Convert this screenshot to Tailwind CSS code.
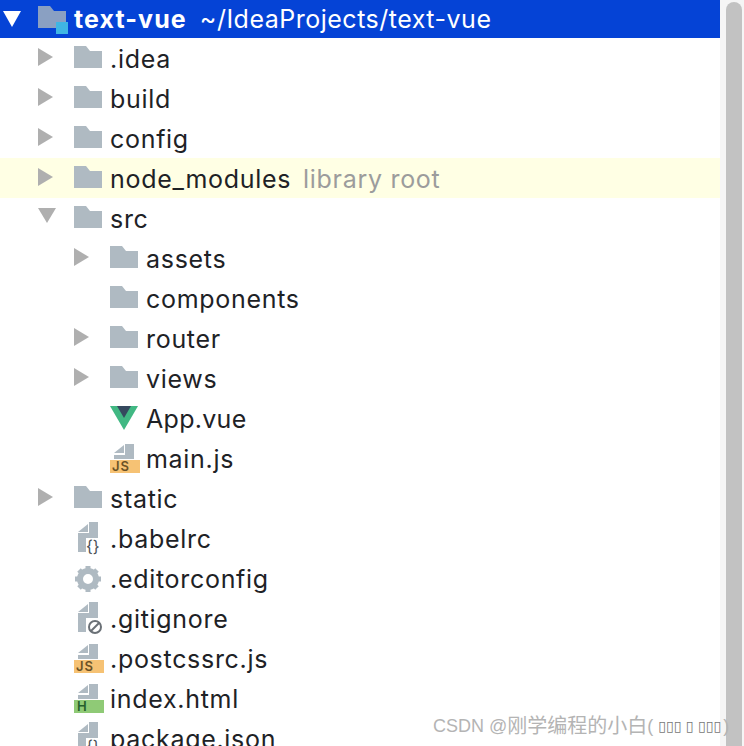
<!DOCTYPE html>
<html lang="en">
<head>
    <meta charset="UTF-8">
    <title>text-vue</title>
    <script src="https://cdn.jsdelivr.net/npm/@tailwindcss/browser@4"></script>
</head>
<body class="bg-white">

    <!-- shared icons, coordinates are relative to a 36x40 icon slot -->
    <svg class="hidden">
        <symbol id="folder" viewBox="0 0 36 40">
            <path d="M0 8H12L16 13H28V30H0Z" fill="#afbac2"/>
        </symbol>
        <symbol id="right" viewBox="0 0 16 40">
            <path d="M0 10L15 19L0 28Z" fill="#afafaf"/>
        </symbol>
        <symbol id="doc" viewBox="0 0 36 40">
            <path d="M4 14L14 6V14Z" fill="#afbac2"/>
            <path d="M15 4H24V34H4V15H15Z" fill="#afbac2"/>
        </symbol>
        <symbol id="shortdoc" viewBox="0 0 36 40">
            <path d="M4 15L14 7V15Z" fill="#afbac2"/>
            <path d="M15 6H24V21H4V17H15Z" fill="#afbac2"/>
        </symbol>
    </svg>

    <div class="relative flex h-[746px] w-[744px] overflow-hidden font-['Inter','Liberation_Sans',sans-serif] text-[25px] tracking-[0.7px] text-[#1e2226]">
        <div class="w-[720px] shrink-0">

            <div class="flex h-[38px] items-center bg-[#0543d6] pl-[3px] text-white">
                <svg class="mr-[17px] w-[18px] h-[18px]" viewBox="0 0 18 18"><path d="M0 1H18L9 17Z" fill="#fff"/></svg>
                <svg class="w-[36px] h-[38px]" viewBox="0 0 36 38">
                    <path d="M0 6H12L16 11H28V28H0Z" fill="#8aa0c2"/>
                    <rect x="18" y="22" width="12" height="12" fill="#3fb6e4"/>
                </svg>
                <span class="mt-0.5 font-bold tracking-[1.1px]">text-vue</span>
                <span class="mt-0.5 ml-[13px] tracking-[0.5px]">~/IdeaProjects/text-vue</span>
            </div>

            <div class="flex h-10 items-center pl-[38px]">
                <svg class="mr-[20px] h-10 w-4"><use href="#right"/></svg>
                <svg class="h-10 w-9"><use href="#folder"/></svg>
                <span class="mt-1">.idea</span>
            </div>
            <div class="flex h-10 items-center pl-[38px]">
                <svg class="mr-[20px] h-10 w-4"><use href="#right"/></svg>
                <svg class="h-10 w-9"><use href="#folder"/></svg>
                <span class="mt-1">build</span>
            </div>
            <div class="flex h-10 items-center pl-[38px]">
                <svg class="mr-[20px] h-10 w-4"><use href="#right"/></svg>
                <svg class="h-10 w-9"><use href="#folder"/></svg>
                <span class="mt-1">config</span>
            </div>
            <div class="flex h-10 items-center bg-[#ffffe4] pl-[38px]">
                <svg class="mr-[20px] h-10 w-4"><use href="#right"/></svg>
                <svg class="h-10 w-9"><use href="#folder"/></svg>
                <span class="mt-1">node_modules</span>
                <span class="mt-1 ml-3 text-[#9c9c9c]">library root</span>
            </div>
            <div class="flex h-10 items-center pl-[38px]">
                <svg class="mr-[18px] h-10 w-[18px]" viewBox="0 0 18 40"><path d="M0 10H18L9 25Z" fill="#afafaf"/></svg>
                <svg class="h-10 w-9"><use href="#folder"/></svg>
                <span class="mt-1">src</span>
            </div>

            <div class="flex h-10 items-center pl-[74px]">
                <svg class="mr-[20px] h-10 w-4"><use href="#right"/></svg>
                <svg class="h-10 w-9"><use href="#folder"/></svg>
                <span class="mt-1">assets</span>
            </div>
            <div class="flex h-10 items-center pl-[110px]">
                <svg class="h-10 w-9"><use href="#folder"/></svg>
                <span class="mt-1">components</span>
            </div>
            <div class="flex h-10 items-center pl-[74px]">
                <svg class="mr-[20px] h-10 w-4"><use href="#right"/></svg>
                <svg class="h-10 w-9"><use href="#folder"/></svg>
                <span class="mt-1">router</span>
            </div>
            <div class="flex h-10 items-center pl-[74px]">
                <svg class="mr-[20px] h-10 w-4"><use href="#right"/></svg>
                <svg class="h-10 w-9"><use href="#folder"/></svg>
                <span class="mt-1">views</span>
            </div>
            <div class="flex h-10 items-center pl-[110px]">
                <svg class="h-10 w-9" viewBox="0 0 36 40">
                    <path d="M0 8H28L14 32Z" fill="#41b883"/>
                    <path d="M7 8H21L14 20Z" fill="#35495e"/>
                </svg>
                <span class="mt-1 tracking-[0.3px]">App.vue</span>
            </div>
            <div class="flex h-10 items-center pl-[110px]">
                <svg class="h-10 w-9" viewBox="0 0 36 40">
                    <use href="#shortdoc"/>
                    <rect x="0" y="22" width="30" height="13" fill="#f6c274"/>
                    <text x="2" y="33" font-size="13" font-weight="600" letter-spacing="1" fill="#6b5226">JS</text>
                </svg>
                <span class="mt-1">main.js</span>
            </div>

            <div class="flex h-10 items-center pl-[38px]">
                <svg class="mr-[20px] h-10 w-4"><use href="#right"/></svg>
                <svg class="h-10 w-9"><use href="#folder"/></svg>
                <span class="mt-1">static</span>
            </div>

            <div class="flex h-10 items-center pl-[74px]">
                <svg class="h-10 w-9" viewBox="0 0 36 40">
                    <use href="#doc"/>
                    <rect x="12" y="20" width="18" height="18" fill="#fff"/>
                    <text x="12" y="34" font-size="16" letter-spacing="0" fill="#4b5156">{}</text>
                </svg>
                <span class="mt-1">.babelrc</span>
            </div>
            <div class="flex h-10 items-center pl-[74px]">
                <svg class="h-10 w-9" viewBox="0 0 36 40">
                    <g transform="translate(14 21)">
                        <circle r="8" fill="none" stroke="#afbac2" stroke-width="6"/>
                        <g stroke="#afbac2" stroke-width="5">
                            <path d="M0 -13V-9M0 9V13M-13 0H-9M9 0H13M-9 -9L-6.5 -6.5M9 9L6.5 6.5M-9 9L-6.5 6.5M9 -9L6.5 -6.5"/>
                        </g>
                    </g>
                </svg>
                <span class="mt-1">.editorconfig</span>
            </div>
            <div class="flex h-10 items-center pl-[74px]">
                <svg class="h-10 w-9" viewBox="0 0 36 40">
                    <use href="#doc"/>
                    <rect x="12" y="20" width="18" height="18" fill="#fff"/>
                    <circle cx="21" cy="29" r="6" fill="none" stroke="#6a7076" stroke-width="2"/>
                    <path d="M17 33L25 25" stroke="#6a7076" stroke-width="2"/>
                </svg>
                <span class="mt-1">.gitignore</span>
            </div>
            <div class="flex h-10 items-center pl-[74px]">
                <svg class="h-10 w-9" viewBox="0 0 36 40">
                    <use href="#shortdoc"/>
                    <rect x="0" y="22" width="30" height="13" fill="#f6c274"/>
                    <text x="2" y="33" font-size="13" font-weight="600" letter-spacing="1" fill="#6b5226">JS</text>
                </svg>
                <span class="mt-1">.postcssrc.js</span>
            </div>
            <div class="flex h-10 items-center pl-[74px]">
                <svg class="h-10 w-9" viewBox="0 0 36 40">
                    <use href="#shortdoc"/>
                    <rect x="0" y="22" width="30" height="13" fill="#8fca76"/>
                    <text x="3" y="33" font-size="13" font-weight="600" fill="#25602c">H</text>
                </svg>
                <span class="mt-1">index.html</span>
            </div>
            <div class="flex h-10 items-center pl-[74px]">
                <svg class="h-10 w-9" viewBox="0 0 36 40">
                    <use href="#doc"/>
                    <rect x="12" y="20" width="18" height="18" fill="#fff"/>
                    <text x="12" y="34" font-size="16" letter-spacing="0" fill="#4b5156">{}</text>
                </svg>
                <span class="mt-1">package.json</span>
            </div>
        </div>

        <!-- scrollbar -->
        <div class="w-6 shrink-0 bg-[#f5f5f5] pl-[6px] pt-[2px]">
            <div class="h-[800px] w-4 rounded-full bg-[#c2c2c2]"></div>
        </div>

        <!-- watermark -->
        <div class="absolute left-[433px] top-[714px] flex items-center whitespace-nowrap font-['Liberation_Sans','Noto_Sans_CJK_SC',sans-serif] text-[18px] leading-6 tracking-normal text-[#b4b4b4]">
            <span>CSDN @</span><span class="text-[20px]">刚学编程的小白</span><span>(</span>
            <span class="ml-[5px] font-['DejaVu_Sans'] text-[14px] text-[#777]">▯▯▯ ▯ ▯▯▯</span>
            <span class="ml-[2px]">)</span>
        </div>
    </div>

</body>
</html>
